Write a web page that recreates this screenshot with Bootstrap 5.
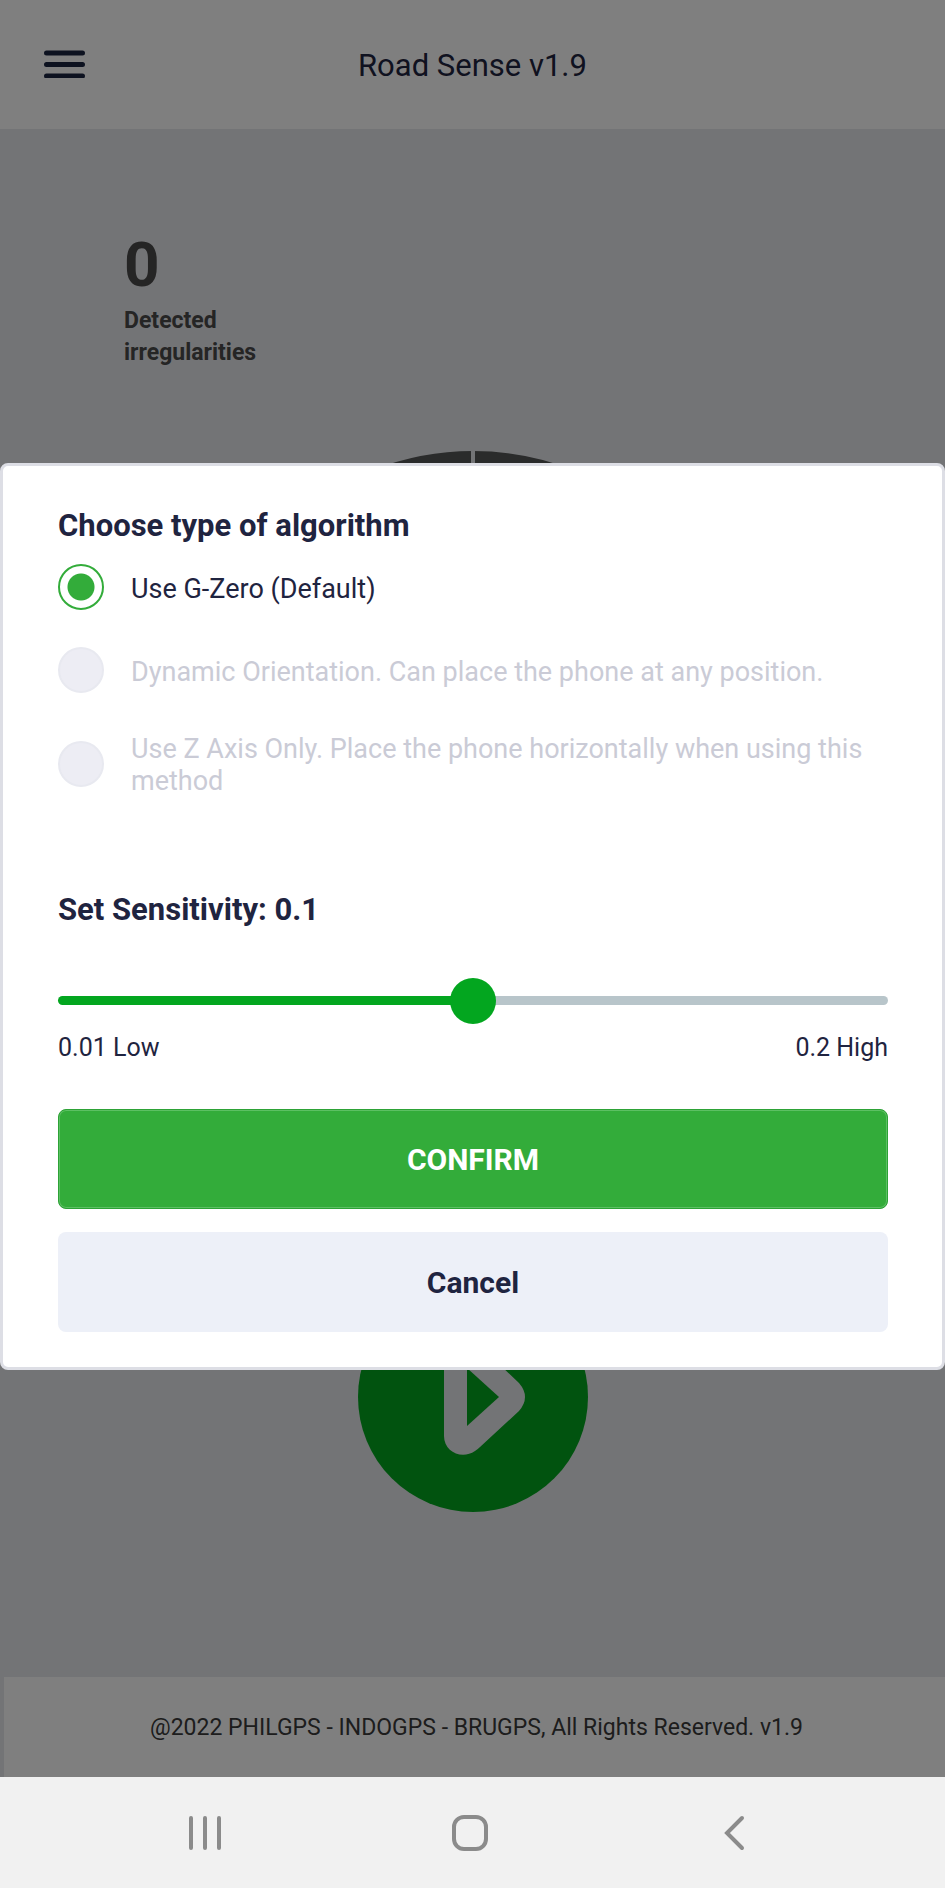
<!DOCTYPE html>
<html lang="en">
<head>
<meta charset="utf-8">
<meta name="viewport" content="width=device-width, initial-scale=1">
<title>Road Sense</title>
<link rel="stylesheet" href="https://cdn.jsdelivr.net/npm/bootstrap@5.3.0/dist/css/bootstrap.min.css">
<style>
  body { font-family: Roboto, "Liberation Sans", sans-serif; background: #e7e8ec; color: #1f2440; }
  .app-header { height: 129px; background: #fff; padding-top: 3px; }
  .menu-btn { left: 44px; top: 50px; line-height: 0; }
  .app-title { font-size: 31px; line-height: 38px; }
  .stat { margin: 99px 0 0 124px; color: #4a4a4a; font-weight: 700; }
  .stat-value { font-size: 62px; line-height: 74px; }
  .stat-label { font-size: 23px; line-height: 32px; margin-top: 3px; }
  .gauge { width: 546px; margin-top: 82px; }
  .play-btn { margin: 285px 0 165px; line-height: 0; }
  .app-footer { height: 100px; margin-left: 4px; padding: 3px 0 0 4px; background: #fff; color: #3a3a3a; font-size: 23px; }
  .scrim { background: rgba(0, 0, 0, .5); padding-top: 56px; }
  .sheet { border: 3px solid #dddee5; border-radius: 8px; background: #fff; padding: 42px 54px 35px 55px; }
  .sheet-heading { font-size: 31px; line-height: 36px; font-weight: 700; }
  .options { margin-top: 20px; display: grid; row-gap: 37px; }
  .option { column-gap: 27px; }
  .option label { font-size: 27px; line-height: 32px; padding-top: 3px; }
  .option input { appearance: none; flex: none; width: 46px; height: 46px; margin: 0; border-radius: 50%; border: 2px solid #33ac3a; background: #fff; }
  .option input:checked { background: radial-gradient(circle, #33ac3a 13px, #fff 14px); }
  .option input:disabled { background: #ededf4; border-color: #e8e9f0; }
  .option input:disabled + label { color: #cacbd6; }
  .sensitivity { margin-top: 95px; }
  .slider { appearance: none; display: block; width: 100%; height: 46px; margin: 49px 0 10px; background: transparent; }
  .slider::-webkit-slider-runnable-track { height: 9px; border-radius: 5px; background: linear-gradient(to right, #03a61f var(--fill), #b8c5ca var(--fill)); }
  .slider::-webkit-slider-thumb { appearance: none; width: 46px; height: 46px; margin-top: -18px; border-radius: 50%; background: #03a61f; }
  .limits { font-size: 25px; line-height: 30px; }
  .actions { margin-top: 46px; row-gap: 23px; }
  .action { height: 100px; border-radius: 8px; font-size: 30px; font-weight: 700; }
  .action-confirm, .action-confirm:hover { color: #fff; background: #33ac3a; border: 1px solid #2da236; box-shadow: inset 0 0 0 1px #5cc063; }
  .action-cancel, .action-cancel:hover { color: #1f2440; background: #edf0f8; border: 0; }
  .system-nav { height: 111px; background: #f1f1f1; padding: 0 101px 0 95px; }
  .system-nav button { flex: 0 0 220px; line-height: 0; }
</style>
</head>
<body class="min-vh-100 d-flex flex-column">
<div class="position-relative flex-grow-1 d-flex flex-column">
  <header class="app-header position-relative d-flex align-items-center justify-content-center">
    <button class="menu-btn btn p-0 border-0 position-absolute" aria-label="Menu">
      <svg width="41" height="28" viewBox="0 0 41 28" stroke="#1b2440" stroke-width="5" stroke-linecap="round"><path d="M2.5 3h36M2.5 14.500h36M2.500 26h36"/></svg>
    </button>
    <h1 class="app-title fw-normal m-0">Road Sense v1.9</h1>
  </header>
  <main class="flex-grow-1 d-flex flex-column align-items-center">
    <div class="stat align-self-start">
      <div class="stat-value">0</div>
      <div class="stat-label">Detected<br>irregularities</div>
    </div>
    <svg class="gauge" viewBox="0 0 546 546" aria-hidden="true"><circle cx="273" cy="273" r="253" fill="none" stroke="#545656" stroke-width="40"/><path d="M273 0v44" stroke="#e7e8ec" stroke-width="4"/></svg>
    <button class="play-btn btn p-0 border-0" aria-label="Start">
      <svg width="230" height="230" viewBox="0 0 230 230"><circle cx="115" cy="115" r="115" fill="#02a61f"/><path fill="#e7e8ec" d="M86 75C86 58 104 51 117 60Q120 62 122 64L161 101Q173 115 161 129L122 165Q120 167 117 169C104 178 86 170 86 154Z"/><path fill="#02a61f" d="M109 86L141 115L109 144Z"/></svg>
    </button>
  </main>
  <footer class="app-footer d-flex align-items-center justify-content-center">@2022 PHILGPS - INDOGPS - BRUGPS, All Rights Reserved. v1.9</footer>

  <div class="scrim position-absolute top-0 start-0 w-100 h-100 d-flex align-items-center">
    <form class="sheet w-100" role="dialog" aria-labelledby="sheet-title">
      <h2 class="sheet-heading m-0" id="sheet-title">Choose type of algorithm</h2>
      <div class="options">
        <div class="option d-flex align-items-center">
          <input type="radio" name="algorithm" id="gzero" checked>
          <label for="gzero">Use G-Zero (Default)</label>
        </div>
        <div class="option d-flex align-items-center">
          <input type="radio" name="algorithm" id="dynamic" disabled>
          <label for="dynamic">Dynamic Orientation. Can place the phone at any position.</label>
        </div>
        <div class="option d-flex align-items-center">
          <input type="radio" name="algorithm" id="zaxis" disabled>
          <label for="zaxis">Use Z Axis Only. Place the phone horizontally when using this method</label>
        </div>
      </div>
      <label class="sheet-heading sensitivity d-block" for="sensitivity">Set Sensitivity: 0.1</label>
      <input class="slider" type="range" id="sensitivity" min="0" max="0.2" step="0.01" value="0.1" style="--fill: 50%">
      <div class="limits d-flex justify-content-between"><span>0.01 Low</span><span>0.2 High</span></div>
      <div class="actions d-grid">
        <button type="button" class="btn action action-confirm">CONFIRM</button>
        <button type="button" class="btn action action-cancel">Cancel</button>
      </div>
    </form>
  </div>
</div>
<nav class="system-nav d-flex align-items-center justify-content-between" aria-label="System">
  <button class="btn border-0" aria-label="Recent apps"><svg width="34" height="36" viewBox="0 0 34 36" stroke="#8b8b8b" stroke-width="4" stroke-linecap="round"><path d="M3 3v30M17 3v30M31 3v30"/></svg></button>
  <button class="btn border-0" aria-label="Home"><svg width="38" height="38" viewBox="0 0 38 38" fill="none" stroke="#8b8b8b" stroke-width="4"><rect x="3" y="3" width="32" height="32" rx="10"/></svg></button>
  <button class="btn border-0" aria-label="Back"><svg width="22" height="36" viewBox="0 0 22 36" fill="none" stroke="#8b8b8b" stroke-width="4" stroke-linecap="round"><path d="M19 3L4 18L19 33"/></svg></button>
</nav>
<script src="https://cdn.jsdelivr.net/npm/bootstrap@5.3.0/dist/js/bootstrap.bundle.min.js"></script>
</body>
</html>
